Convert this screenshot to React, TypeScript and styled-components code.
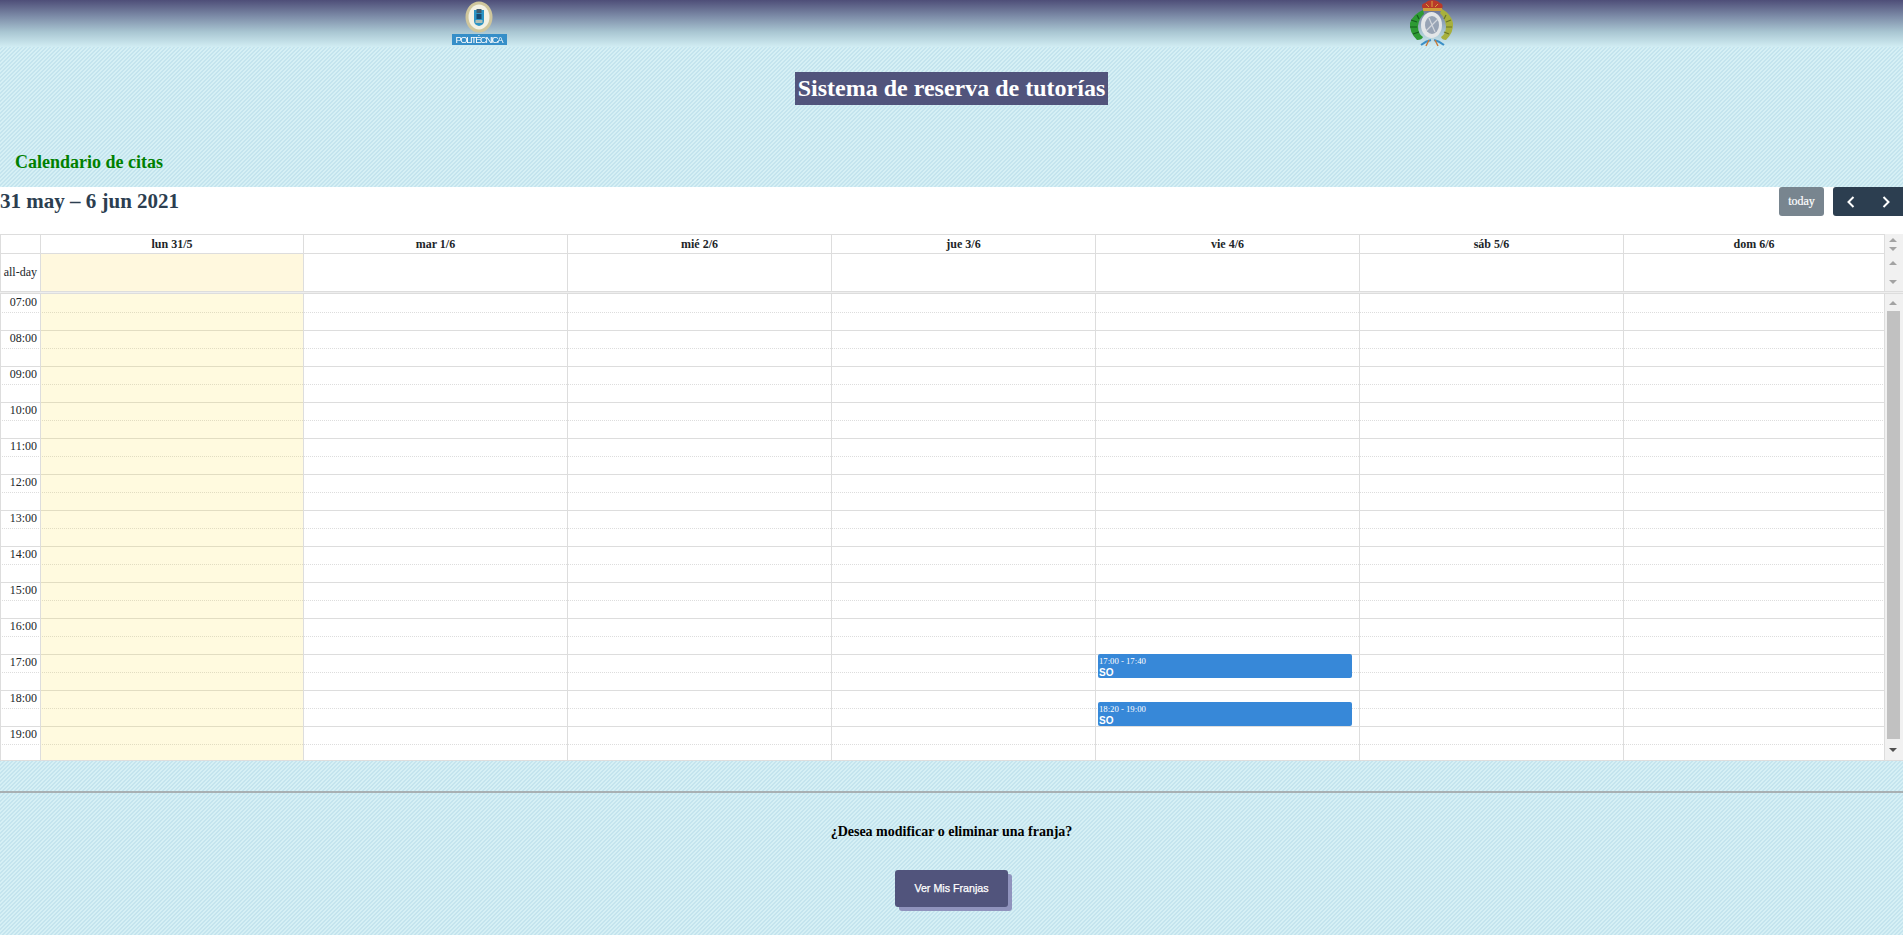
import React from "react";
import styled, { createGlobalStyle } from "styled-components";

const Global = createGlobalStyle`
  html, body { margin: 0; padding: 0; }
  body {
    font-family: "Liberation Serif", "Times New Roman", serif;
    background-color: #d6f0f5;
    background-image: linear-gradient(135deg, #c4e4ee 25%, #d6f0f5 25%, #d6f0f5 50%, #c4e4ee 50%, #c4e4ee 75%, #d6f0f5 75%);
    background-size: 4px 4px;
    overflow: hidden;
    height: 935px;
  }
`;

const columnTemplate = "41px 263px repeat(5, 264px) 261px";

const Banner = styled.header`
  height: 47px;
  display: grid;
  grid-template-columns: 960px 943px;
  background: linear-gradient(to bottom, #4e4e78 0%, #7d8ca8 35%, #a9c6d2 68%, #d1edf3 100%);
`;
const LogoCell = styled.div`
  display: flex;
  justify-content: center;
  align-items: flex-start;
`;
const LogoSvg = styled.svg`
  display: block;
  filter: blur(0.45px);
`;
const TitleRow = styled.div`
  display: flex;
  justify-content: center;
  padding-top: 25px;
`;
const Title = styled.h1`
  margin: 0;
  height: 33px;
  padding: 0 3px;
  font-size: 24px;
  line-height: 33px;
  font-weight: 700;
  color: #fff;
  background: #51547c;
`;
const SectionTitle = styled.h2`
  margin: 46px 0 0;
  padding-left: 15px;
  height: 36px;
  font-size: 18px;
  line-height: 22px;
  font-weight: 700;
  color: #008000;
`;
const Calendar = styled.section`
  background: #fff;
  height: 574px;
  color: #212529;
`;
const Toolbar = styled.div`
  height: 47px;
  display: flex;
  justify-content: space-between;
  align-items: flex-start;
`;
const RangeTitle = styled.h2`
  margin: 0;
  font-size: 21px;
  line-height: 28px;
  font-weight: 700;
  color: #2c3e50;
`;
const Buttons = styled.div`
  display: flex;
  gap: 9px;
`;
const TodayButton = styled.button`
  width: 45px;
  height: 29px;
  padding: 0;
  border: 0;
  border-radius: 3px;
  background: #78858f;
  color: #fff;
  font: 400 12px "Liberation Serif", serif;
  -webkit-text-stroke: 0.2px #fff;
`;
const NavGroup = styled.div`
  width: 70px;
  height: 29px;
  border-radius: 3px 0 0 3px;
  background: #2c3e50;
  display: flex;
`;
const NavButton = styled.button`
  flex: 1;
  padding: 0;
  border: 0;
  background: none;
  display: flex;
  align-items: center;
  justify-content: center;
`;
const Row = styled.div<{ $h: number }>`
  display: grid;
  grid-template-columns: ${columnTemplate} 18px;
  height: ${(p) => p.$h}px;
`;
const HeadCell = styled.div<{ $first?: boolean }>`
  border-top: 1px solid #ddd;
  border-bottom: 1px solid #ddd;
  border-right: 1px solid #ddd;
  border-left: ${(p) => (p.$first ? "1px solid #ddd" : "0")};
  text-align: center;
  font-size: 12px;
  font-weight: 700;
  line-height: 18px;
`;
const AllDayLabel = styled.div`
  border-left: 1px solid #ddd;
  border-right: 1px solid #ddd;
  display: flex;
  align-items: center;
  justify-content: flex-end;
  padding-right: 3px;
  font-size: 12px;
`;
const AllDayCell = styled.div<{ $today?: boolean }>`
  border-right: 1px solid #ddd;
  background: ${(p) => (p.$today ? "#fff8de" : "#fff")};
`;
const ScrollTrack = styled.div`
  position: relative;
  background: #f1f1f1;
`;
const Arrow = styled.span<{ $top: number; $down?: boolean; $dark?: boolean }>`
  position: absolute;
  left: 4px;
  top: ${(p) => p.$top}px;
  width: 0;
  height: 0;
  border-left: 4px solid transparent;
  border-right: 4px solid transparent;
  ${(p) =>
    p.$down
      ? `border-top: 4px solid ${p.$dark ? "#505050" : "#a3a3a3"};`
      : `border-bottom: 4px solid ${p.$dark ? "#505050" : "#a3a3a3"};`}
`;
const Divider = styled.div`
  height: 3px;
  box-sizing: border-box;
  border-top: 1px solid #ddd;
  border-bottom: 1px solid #ddd;
  background: #eee;
`;
const TimeBody = styled.div`
  display: grid;
  grid-template-columns: 1fr 18px;
  height: 467px;
  box-sizing: border-box;
  border-bottom: 1px solid #ddd;
`;
const TimeArea = styled.div`
  position: relative;
  overflow: hidden;
  padding-top: 1px;
  box-sizing: border-box;
`;
const Slot = styled.div<{ $hour?: boolean }>`
  height: 18px;
  box-sizing: border-box;
  border-bottom: 1px ${(p) => (p.$hour ? "dotted" : "solid")} #ddd;
  position: relative;
`;
const TimeLabel = styled.span`
  position: absolute;
  right: calc(100% - 37px);
  top: 0;
  font-size: 12px;
  line-height: 15px;
  color: #212529;
`;
const Columns = styled.div`
  position: absolute;
  inset: 0;
  display: grid;
  grid-template-columns: ${columnTemplate};
`;
const Gutter = styled.div`
  border-left: 1px solid #ddd;
  border-right: 1px solid #ddd;
`;
const DayColumn = styled.div<{ $today?: boolean }>`
  position: relative;
  border-right: 1px solid #ddd;
  background: ${(p) => (p.$today ? "rgba(255, 220, 40, 0.15)" : "transparent")};
`;
const Event = styled.div`
  position: absolute;
  left: 2px;
  right: 7px;
  height: 24px;
  box-sizing: border-box;
  padding: 2px 1px 0;
  background: #3788d8;
  border-radius: 2px;
  color: #fff;
  overflow: hidden;
`;
const EventTime = styled.div`
  font-size: 8.7px;
  line-height: 11px;
`;
const EventTitle = styled.div`
  font-family: "Liberation Sans", Arial, sans-serif;
  font-size: 10px;
  font-weight: 700;
  line-height: 11px;
`;
const Thumb = styled.div`
  position: absolute;
  left: 2px;
  right: 3px;
  top: 17px;
  height: 428px;
  background: #c1c1c1;
`;
const Rule = styled.hr`
  margin: 30px 0 0;
  border: 0;
  border-top: 2px solid #a8b0b3;
  height: 0;
`;
const Question = styled.p`
  margin: 30px 0 0;
  height: 47px;
  text-align: center;
  font-size: 14px;
  line-height: 18px;
  font-weight: 700;
  color: #000;
`;
const ActionRow = styled.div`
  display: flex;
  justify-content: center;
`;
const ActionButton = styled.button`
  width: 113px;
  height: 37px;
  padding: 0 0 1px;
  border: 0;
  border-radius: 3px;
  background: #51547c;
  box-shadow: 4px 4px 0 #9093bd;
  color: #fff;
  font: 400 10.7px "Liberation Sans", Arial, sans-serif;
  -webkit-text-stroke: 0.25px #fff;
`;

const days = ["lun 31/5", "mar 1/6", "mié 2/6", "jue 3/6", "vie 4/6", "sáb 5/6", "dom 6/6"];
const hours = ["07", "08", "09", "10", "11", "12", "13", "14", "15", "16", "17", "18", "19"];
const events = [
  { top: 360, time: "17:00 - 17:40" },
  { top: 408, time: "18:20 - 19:00" },
];

const Chevron = ({ flip }: { flip?: boolean }) => (
  <svg width="10" height="14" viewBox="0 0 10 14">
    <path d={flip ? "M2.5 2l5 5-5 5" : "M7.5 2l-5 5 5 5"} fill="none" stroke="#fff" strokeWidth="2" />
  </svg>
);

const UpmLogo = () => (
  <LogoSvg width="58" height="47" viewBox="0 0 58 47">
    <ellipse cx="28" cy="17" rx="13.5" ry="15.5" fill="#cfc69c" />
    <ellipse cx="28" cy="17" rx="10.5" ry="12.5" fill="#f3f1e4" />
    <path d="M23 10h10v11q0 4-5 5q-5-1-5-5z" fill="#2b93c4" />
    <rect x="25.5" y="9" width="5" height="4" fill="#3d5a6e" />
    <rect x="25.5" y="14" width="5" height="5" fill="#174a70" />
    <rect x="24.5" y="20" width="7" height="3" fill="#aebcb4" />
    <rect x="1" y="34" width="55" height="11" fill="#358ec8" />
    <text x="28.5" y="43.2" textAnchor="middle" fontFamily="'Liberation Sans', sans-serif" fontSize="9.5" fill="#fff" textLength="48">POLITÉCNICA</text>
  </LogoSvg>
);

const CrestLogo = () => (
  <LogoSvg width="46" height="47" viewBox="0 0 46 47">
    <path d="M14 9q-3-5 2-6q3-3 7-3q5 0 8 3q4 1 2 6z" fill="#b8392a" />
    <path d="M17 4l3 3M23 1v6M29 4l-3 3" stroke="#d9a53f" strokeWidth="1" />
    <rect x="14" y="8" width="19" height="3" fill="#cf9d3a" />
    <path d="M14 10q-10 4-13 13q-1 9 7 17q5 0 6-3q-5-3-5-11q1-8 6-12z" fill="#2d9a33" />
    <path d="M2 20l6 2M1 27l7 0M4 34l6-2M8 15l2 4" stroke="#155d1d" strokeWidth="1.2" />
    <path d="M33 9q9 5 11 14q1 9-7 17q-4 0-5-3q5-3 5-11q-1-8-6-13z" fill="#a7b03c" />
    <path d="M42 20l-5 2M43 27l-6 0M40 34l-5-2M37 15l-2 4" stroke="#6a7524" strokeWidth="1.2" />
    <ellipse cx="22.5" cy="25" rx="10.5" ry="13" fill="#e3e6e8" />
    <ellipse cx="23" cy="25" rx="7" ry="9" fill="#98a4b5" />
    <path d="M17 31l12-12M20 18l6 14" stroke="#d2d6dc" strokeWidth="1.2" />
    <path d="M12 45q5-4 10-5M35 45q-5-4-10-5" stroke="#3b8fc6" strokeWidth="2" fill="none" />
    <path d="M20 40l-3 6M26 40l3 6" stroke="#c77a3a" strokeWidth="1.4" />
  </LogoSvg>
);

export default function App() {
  return (
    <>
      <Global />
      <Banner>
        <LogoCell>
          <UpmLogo />
        </LogoCell>
        <LogoCell>
          <CrestLogo />
        </LogoCell>
      </Banner>
      <TitleRow>
        <Title>Sistema de reserva de tutorías</Title>
      </TitleRow>
      <SectionTitle>Calendario de citas</SectionTitle>
      <Calendar>
        <Toolbar>
          <RangeTitle>31 may – 6 jun 2021</RangeTitle>
          <Buttons>
            <TodayButton>today</TodayButton>
            <NavGroup>
              <NavButton aria-label="prev">
                <Chevron />
              </NavButton>
              <NavButton aria-label="next">
                <Chevron flip />
              </NavButton>
            </NavGroup>
          </Buttons>
        </Toolbar>
        <Row $h={20}>
          <HeadCell $first />
          {days.map((d) => (
            <HeadCell key={d}>{d}</HeadCell>
          ))}
          <ScrollTrack>
            <Arrow $top={4} />
            <Arrow $top={13} $down />
          </ScrollTrack>
        </Row>
        <Row $h={37}>
          <AllDayLabel>all-day</AllDayLabel>
          {days.map((d, i) => (
            <AllDayCell key={d} $today={i === 0} />
          ))}
          <ScrollTrack>
            <Arrow $top={7} />
            <Arrow $top={26} $down />
          </ScrollTrack>
        </Row>
        <Divider />
        <TimeBody>
          <TimeArea>
            {hours.map((h) => (
              <React.Fragment key={h}>
                <Slot $hour>
                  <TimeLabel>{h}:00</TimeLabel>
                </Slot>
                <Slot />
              </React.Fragment>
            ))}
            <Columns>
              <Gutter />
              {days.map((d, i) => (
                <DayColumn key={d} $today={i === 0}>
                  {i === 4 &&
                    events.map((e) => (
                      <Event key={e.time} style={{ top: e.top }}>
                        <EventTime>{e.time}</EventTime>
                        <EventTitle>SO</EventTitle>
                      </Event>
                    ))}
                </DayColumn>
              ))}
            </Columns>
          </TimeArea>
          <ScrollTrack>
            <Arrow $top={7} />
            <Thumb />
            <Arrow $top={454} $down $dark />
          </ScrollTrack>
        </TimeBody>
      </Calendar>
      <Rule />
      <Question>¿Desea modificar o eliminar una franja?</Question>
      <ActionRow>
        <ActionButton>Ver Mis Franjas</ActionButton>
      </ActionRow>
    </>
  );
}
